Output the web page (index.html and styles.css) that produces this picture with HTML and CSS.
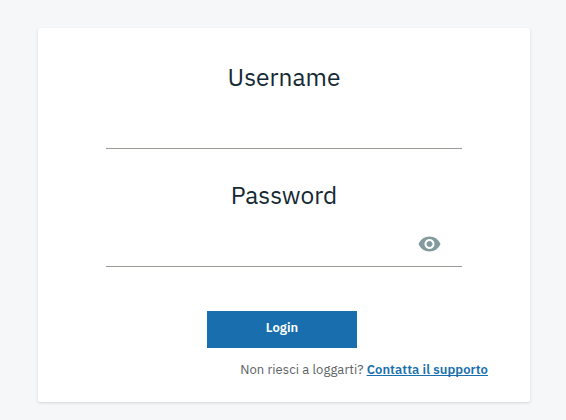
FILE: index.html
```html
<!DOCTYPE html>
<html lang="it">
<head>
<meta charset="utf-8">
<title>Login</title>
<link rel="stylesheet" href="styles.css">
</head>
<body>
<form class="card">
  <label class="label" for="user">Username</label>
  <div class="field"><input id="user" type="text"></div>
  <label class="label" for="pass">Password</label>
  <div class="field">
    <input id="pass" type="password">
    <svg class="eye" viewBox="0 0 24 24"><path d="M12 4.5C7 4.5 2.73 7.61 1 12c1.73 4.39 6 7.5 11 7.5s9.27-3.11 11-7.5c-1.73-4.39-6-7.5-11-7.5zM12 17c-2.76 0-5-2.24-5-5s2.24-5 5-5 5 2.24 5 5-2.24 5-5 5zm0-8c-1.66 0-3 1.34-3 3s1.34 3 3 3 3-1.34 3-3-1.34-3-3-3z"/></svg>
  </div>
  <button class="login" type="button">Login</button>
  <p class="support"><span class="question">Non riesci a loggarti?</span> <a href="#">Contatta il supporto</a></p>
</form>
</body>
</html>
```
FILE: styles.css
```css
* { box-sizing: border-box; }
body {
  margin: 0;
  padding: 28px 36px 18px 38px;
  height: 420px;
  overflow: hidden;
  background: #f5f7f9;
  font-family: "IBM Plex Sans", Roboto, "Liberation Sans", sans-serif;
  color: #152935;
}
.card {
  height: 374px;
  padding: 32px 42px 0 68px;
  background: #fff;
  border-radius: 2px;
  box-shadow: 0 1px 3px rgba(0, 0, 0, .14);
}
.label {
  display: block;
  width: 356px;
  height: 36px;
  font-size: 24.5px;
  line-height: 34px;
  text-align: center;
}
.field {
  display: flex;
  align-items: center;
  width: 356px;
  height: 53px;
  margin-bottom: 29px;
  padding-right: 20px;
  border-bottom: 1px solid #999b95;
}
.field input {
  flex: 1;
  min-width: 0;
  height: 40px;
  border: 0;
  outline: 0;
  background: transparent;
  font: inherit;
}
.eye { width: 25px; height: 24px; margin-top: 7px; fill: #839b9d; }
.login {
  display: block;
  width: 150px;
  height: 37px;
  margin: 44px 0 0 101px;
  padding: 0 0 3px;
  border: 0;
  background: #196fae;
  color: #fff;
  font: 600 13px/20px "IBM Plex Sans", Roboto, sans-serif;
}
.support {
  margin: 12px 0 0;
  font-size: 13px;
  line-height: 20px;
  text-align: right;
  white-space: nowrap;
}
.question { color: #5c6265; letter-spacing: .08px; }
.support a {
  color: #196fae;
  font-weight: 600;
  letter-spacing: .06px;
  text-decoration-thickness: 1px;
  text-decoration-skip-ink: none;
  text-underline-offset: 1px;
}
```
